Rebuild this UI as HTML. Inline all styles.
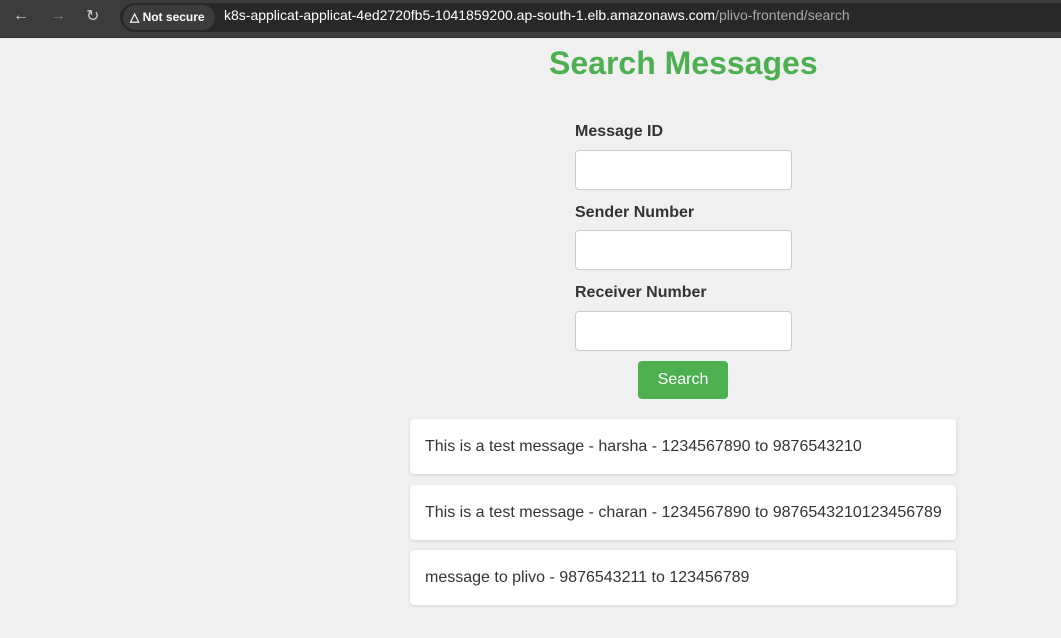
<!DOCTYPE html>
<html><head><style>
body{margin:0;width:1061px;height:638px;background:#f0f0f0;font-family:"Liberation Sans",sans-serif;position:relative;overflow:hidden;color:#333}
.bar{position:absolute;left:0;top:0;width:1061px;height:37px;background:#3c3c3c;border-bottom:1px solid #2a2a2a}
.omni{position:absolute;left:120px;top:3px;width:960px;height:29px;border-radius:15px;background:#282828}
.pill{position:absolute;left:123px;top:5px;width:92px;height:25px;border-radius:13px;background:#3c3c3c;color:#fff;font-size:12px;font-weight:bold;line-height:25px}
.url{position:absolute;left:224px;top:6px;font-size:14px;color:#fff;line-height:18px}
.url span{color:#a8a8a8}
.a{position:absolute;color:#ccc;font-size:16px}
h1{position:absolute;left:0;width:1366px;margin:0;top:45px;font-size:32px;color:#4caf50;text-align:center;width:1366px}
.lbl{position:absolute;left:575px;font-size:16px;font-weight:bold;color:#333}
.in{position:absolute;left:575px;width:215px;height:38px;background:#fff;border:1px solid #ccc;border-radius:4px}
.btn{position:absolute;left:638px;top:361px;width:90px;height:38px;background:#4caf50;color:#fff;border-radius:4px;text-align:center;line-height:38px;font-size:16px}
.card{position:absolute;left:410px;width:546px;height:55px;background:#fff;border-radius:4px;box-shadow:0 1px 3px rgba(0,0,0,.12);font-size:16px;line-height:55px;padding-left:15px;box-sizing:border-box}
</style></head><body>
<div class="bar">
<div class="a" style="left:13px;top:7px">&#8592;</div>
<div class="a" style="left:50px;top:7px;color:#777">&#8594;</div>
<div class="a" style="left:86px;top:6px">&#8635;</div>
<div class="omni"></div>
<div class="pill"><span style="margin-left:7px">&#9651; Not secure</span></div>
<div class="url">k8s-applicat-applicat-4ed2720fb5-1041859200.ap-south-1.elb.amazonaws.com<span>/plivo-frontend/search</span></div>
</div>
<div style="position:absolute;left:549px;top:45px;font-size:32px;font-weight:bold;color:#4caf50">Search Messages</div>
<div class="lbl" style="top:123px">Message ID</div>
<div class="in" style="top:150px"></div>
<div class="lbl" style="top:204px">Sender Number</div>
<div class="in" style="top:230px"></div>
<div class="lbl" style="top:284px">Receiver Number</div>
<div class="in" style="top:311px"></div>
<div class="btn">Search</div>
<div class="card" style="top:419px">This is a test message - harsha - 1234567890 to 9876543210</div>
<div class="card" style="top:485px">This is a test message - charan - 1234567890 to 9876543210123456789</div>
<div class="card" style="top:550px">message to plivo - 9876543211 to 123456789</div>
</body></html>
